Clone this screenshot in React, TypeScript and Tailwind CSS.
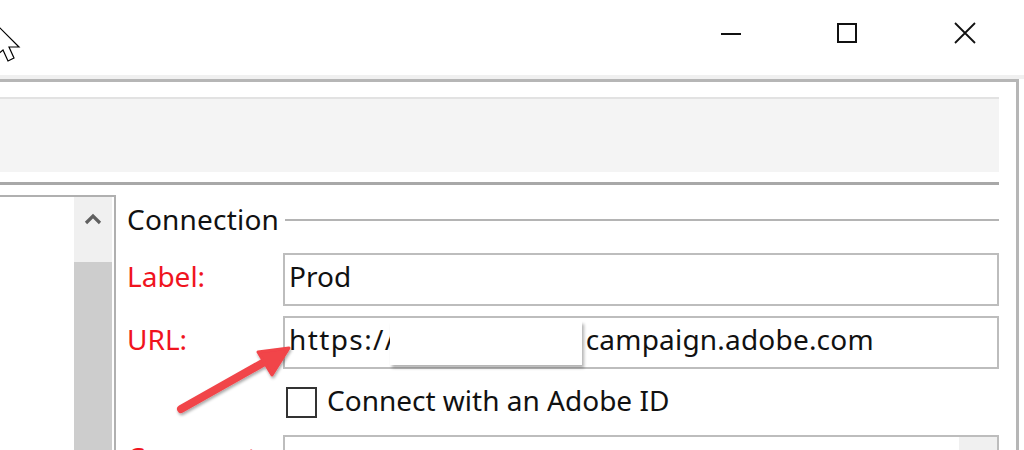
import React from "react";

function Cursor() {
  return (
    <svg width="30" height="70" viewBox="0 0 30 70" className="absolute left-0 top-0">
      <path d="M-4 24 L19 47 L9 47 L14 58 L8 61 L3 50 L-4 56 Z" fill="#fff" stroke="#000" strokeWidth="1.2" strokeLinejoin="miter" />
    </svg>
  );
}

function RedArrow() {
  return (
    <svg width="140" height="90" viewBox="0 0 140 90" className="absolute left-[168px] top-[336px] overflow-visible">
      <defs>
        <filter id="sh" x="-20%" y="-20%" width="140%" height="140%">
          <feDropShadow dx="1" dy="2" stdDeviation="1.5" floodColor="#000" floodOpacity="0.35" />
        </filter>
      </defs>
      <g filter="url(#sh)">
        <line x1="13" y1="73" x2="100" y2="24" stroke="#f1444a" strokeWidth="8" strokeLinecap="round" />
        <polygon points="121,12 90,16 104,39" fill="#f1444a" stroke="#f1444a" strokeWidth="3" strokeLinejoin="round" />
      </g>
    </svg>
  );
}

function Field({ children }: { children?: React.ReactNode }) {
  return (
    <div className="flex-1 h-[53px] border-2 border-[#bdbdbd] bg-white flex items-center pl-[4px] pb-[7px] text-[28px] text-[#111]">
      {children}
    </div>
  );
}

export default function App() {
  return (
    <div
      className="relative w-[1024px] h-[450px] overflow-hidden bg-white flex flex-col"
      style={{ fontFamily: '"Noto Sans", "Open Sans", sans-serif' }}
    >
      <Cursor />
      <div className="h-[75px] flex items-center justify-end shrink-0">
        <div className="w-[20px] h-[2px] bg-[#111] mr-[96px] mt-[-8px]" />
        <div className="w-[20px] h-[20px] border-2 border-[#111] mr-[97px] mt-[-10px]" />
        <svg width="22" height="22" viewBox="0 0 22 22" className="mr-[48px] mt-[-10px]">
          <path d="M1 1 L21 21 M21 1 L1 21" stroke="#111" strokeWidth="1.8" />
        </svg>
      </div>
      <div className="h-[4px] bg-[#f0f0f0] shrink-0" />
      <div className="flex-1 flex flex-col border-t-[3px] border-r-[3px] border-[#b6b6b6] mr-[5px] pr-[17px]">
        <div className="h-[15px]" />
        <div className="h-[75px] border-t-2 border-[#e2e2e2] bg-[#f4f4f4]" />
        <div className="h-[10px]" />
        <div className="h-[3px] bg-[#a8a8a8]" />
        <div className="h-[10px]" />
        <div className="flex flex-1">
          <div className="w-[116px] shrink-0 border-t-2 border-r-2 border-[#b0b0b0] flex justify-end pr-[2px]">
            <div className="w-[38px] flex flex-col">
              <div className="h-[65px] bg-[#f0f0f0] flex justify-center pt-[15px]">
                <svg width="20" height="14" viewBox="0 0 20 14">
                  <path d="M3 11 L10 4 L17 11" fill="none" stroke="#606060" strokeWidth="3.2" />
                </svg>
              </div>
              <div className="flex-1 bg-[#cdcdcd]" />
            </div>
          </div>
          <div className="flex-1 flex flex-col pl-[11px] text-[28px]">
            <div className="h-[50px] flex items-center gap-[6px]">
              <span className="text-[#111] leading-none mb-[2px] tracking-[0.2px]">Connection</span>
              <div className="flex-1 h-[2px] bg-[#b4b4b4]" />
            </div>
            <div className="flex items-center mt-[8px]">
              <span className="w-[156px] text-[#f0141e] pb-[7px]">Label:</span>
              <Field>Prod</Field>
            </div>
            <div className="flex items-center mt-[10px]">
              <span className="w-[156px] text-[#f0141e] pb-[7px]">URL:</span>
              <Field>
                <span className="tracking-[1.4px]">https://</span>
                <span className="relative inline-block -ml-[7px] mr-[4px] mt-[7px] w-[192px] h-[44px] bg-white shadow-[2px_3px_3px_rgba(0,0,0,0.3)]" />
                <span className="tracking-[0.2px]">campaign.adobe.com</span>
              </Field>
            </div>
            <div className="flex items-center mt-[18px] pl-[159px] h-[31px]">
              <div className="w-[31px] h-[31px] border-2 border-[#333] bg-white" />
              <span className="ml-[10px] text-[#111] mb-[5px]">Connect with an Adobe ID</span>
            </div>
            <div className="flex items-start mt-[17px]">
              <span className="w-[156px] text-[#f0141e] leading-none pt-[8px]">Comment:</span>
              <div className="flex-1 h-[53px] border-2 border-[#bdbdbd] bg-white flex justify-end">
                <div className="w-[38px] h-full bg-[#f0f0f0]" />
              </div>
            </div>
          </div>
        </div>
      </div>
      <RedArrow />
    </div>
  );
}
